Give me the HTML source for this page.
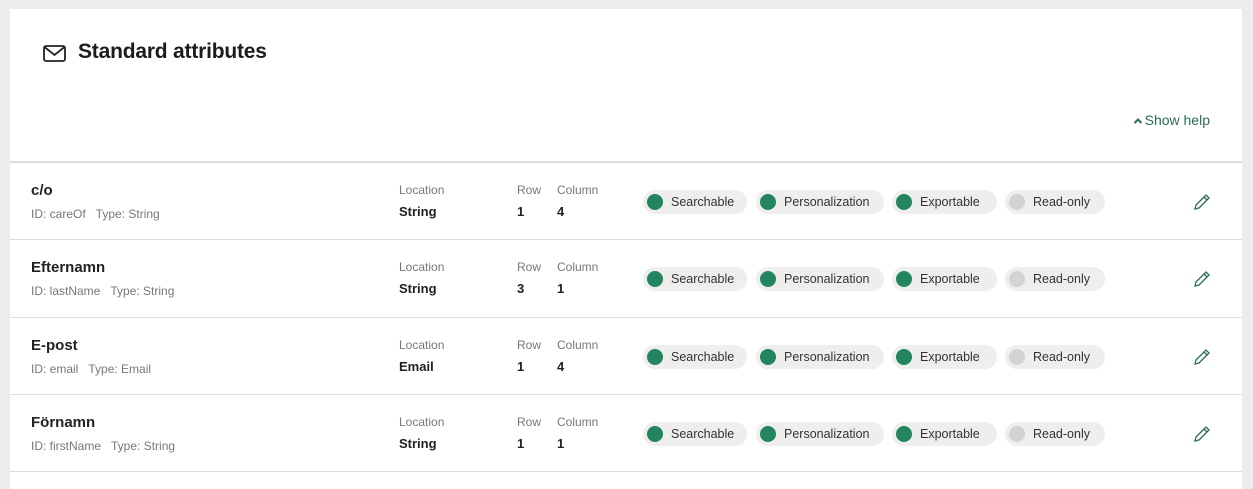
<!DOCTYPE html>
<html><head><meta charset="utf-8"><style>
*{margin:0;padding:0;box-sizing:border-box}
body{width:1253px;height:483px;background:#ececec;font-family:"Liberation Sans",sans-serif;position:relative;overflow:hidden;color:#222}
.card{position:absolute;left:10px;top:9px;width:1232px;height:480px;background:#fff}
.t{position:absolute;white-space:nowrap}
.h{left:68px;top:31px;font-size:21px;font-weight:bold;letter-spacing:-0.2px;color:#1c1c1c}
.help{right:32px;top:103px;font-size:14px;color:#2c6b5a}
.sep{position:absolute;left:0;width:1232px;height:1px;background:#dcdcdc}
.row{position:absolute;left:0;width:1232px;height:77px}
.nm{left:21px;top:19px;font-size:15px;font-weight:bold;color:#222}
.id{left:21px;top:44px;font-size:12px;color:#777}
.lb{top:20px;font-size:12px;color:#777}
.vl{top:41px;font-size:13px;font-weight:bold;color:#222}
.pill{position:absolute;top:27px;height:24px;border-radius:12px;background:#eeeeed;font-size:12.5px;color:#333;padding-left:28px;line-height:24px}
.pill:before{content:"";position:absolute;left:4px;top:4px;width:16px;height:16px;border-radius:50%;background:#23855f}
.pill.off:before{background:#d3d3d1}
.pen{position:absolute;left:1183px;top:30px}
</style></head><body>
<div class="card">
<svg style="position:absolute;left:33px;top:36px" width="23" height="17" viewBox="0 0 23 17"><rect x="1" y="1" width="21" height="15" rx="2" fill="none" stroke="#222" stroke-width="1.8"/><path d="M1.5 2l10 8 10-8" fill="none" stroke="#222" stroke-width="1.8"/></svg>
<div class="t h">Standard attributes</div>
<div class="t help"><svg width="10" height="8" viewBox="0 0 10 8" style="margin-right:2px"><path d="M1.5 6L5 2.5 8.5 6" fill="none" stroke="#2c6b5a" stroke-width="2"/></svg>Show help</div>
<div class="sep" style="top:152px;height:2px"></div>

<div class="row" style="top:154px">
<div class="t nm">c/o</div><div class="t id">ID: careOf &nbsp;&nbsp;Type: String</div>
<div class="t lb" style="left:389px">Location</div><div class="t vl" style="left:389px">String</div>
<div class="t lb" style="left:507px">Row</div><div class="t vl" style="left:507px">1</div>
<div class="t lb" style="left:547px">Column</div><div class="t vl" style="left:547px">4</div>
<div class="pill" style="left:633px;width:104px">Searchable</div><div class="pill" style="left:746px;width:128px">Personalization</div><div class="pill" style="left:882px;width:105px">Exportable</div><div class="pill off" style="left:995px;width:100px">Read-only</div>
<svg class="pen" width="18" height="18" viewBox="0 0 18 18"><path d="M2 16l1-4L13 2l3 3L6 15z M11 4l3 3" fill="none" stroke="#2c6b5a" stroke-width="1.3"/></svg>
</div>
<div class="sep" style="top:230px"></div>

<div class="row" style="top:231px">
<div class="t nm">Efternamn</div><div class="t id">ID: lastName &nbsp;&nbsp;Type: String</div>
<div class="t lb" style="left:389px">Location</div><div class="t vl" style="left:389px">String</div>
<div class="t lb" style="left:507px">Row</div><div class="t vl" style="left:507px">3</div>
<div class="t lb" style="left:547px">Column</div><div class="t vl" style="left:547px">1</div>
<div class="pill" style="left:633px;width:104px">Searchable</div><div class="pill" style="left:746px;width:128px">Personalization</div><div class="pill" style="left:882px;width:105px">Exportable</div><div class="pill off" style="left:995px;width:100px">Read-only</div>
<svg class="pen" width="18" height="18" viewBox="0 0 18 18"><path d="M2 16l1-4L13 2l3 3L6 15z M11 4l3 3" fill="none" stroke="#2c6b5a" stroke-width="1.3"/></svg>
</div>
<div class="sep" style="top:308px"></div>

<div class="row" style="top:309px">
<div class="t nm">E-post</div><div class="t id">ID: email &nbsp;&nbsp;Type: Email</div>
<div class="t lb" style="left:389px">Location</div><div class="t vl" style="left:389px">Email</div>
<div class="t lb" style="left:507px">Row</div><div class="t vl" style="left:507px">1</div>
<div class="t lb" style="left:547px">Column</div><div class="t vl" style="left:547px">4</div>
<div class="pill" style="left:633px;width:104px">Searchable</div><div class="pill" style="left:746px;width:128px">Personalization</div><div class="pill" style="left:882px;width:105px">Exportable</div><div class="pill off" style="left:995px;width:100px">Read-only</div>
<svg class="pen" width="18" height="18" viewBox="0 0 18 18"><path d="M2 16l1-4L13 2l3 3L6 15z M11 4l3 3" fill="none" stroke="#2c6b5a" stroke-width="1.3"/></svg>
</div>
<div class="sep" style="top:385px"></div>

<div class="row" style="top:386px">
<div class="t nm">Förnamn</div><div class="t id">ID: firstName &nbsp;&nbsp;Type: String</div>
<div class="t lb" style="left:389px">Location</div><div class="t vl" style="left:389px">String</div>
<div class="t lb" style="left:507px">Row</div><div class="t vl" style="left:507px">1</div>
<div class="t lb" style="left:547px">Column</div><div class="t vl" style="left:547px">1</div>
<div class="pill" style="left:633px;width:104px">Searchable</div><div class="pill" style="left:746px;width:128px">Personalization</div><div class="pill" style="left:882px;width:105px">Exportable</div><div class="pill off" style="left:995px;width:100px">Read-only</div>
<svg class="pen" width="18" height="18" viewBox="0 0 18 18"><path d="M2 16l1-4L13 2l3 3L6 15z M11 4l3 3" fill="none" stroke="#2c6b5a" stroke-width="1.3"/></svg>
</div>
<div class="sep" style="top:462px"></div>
</div>
</body></html>
